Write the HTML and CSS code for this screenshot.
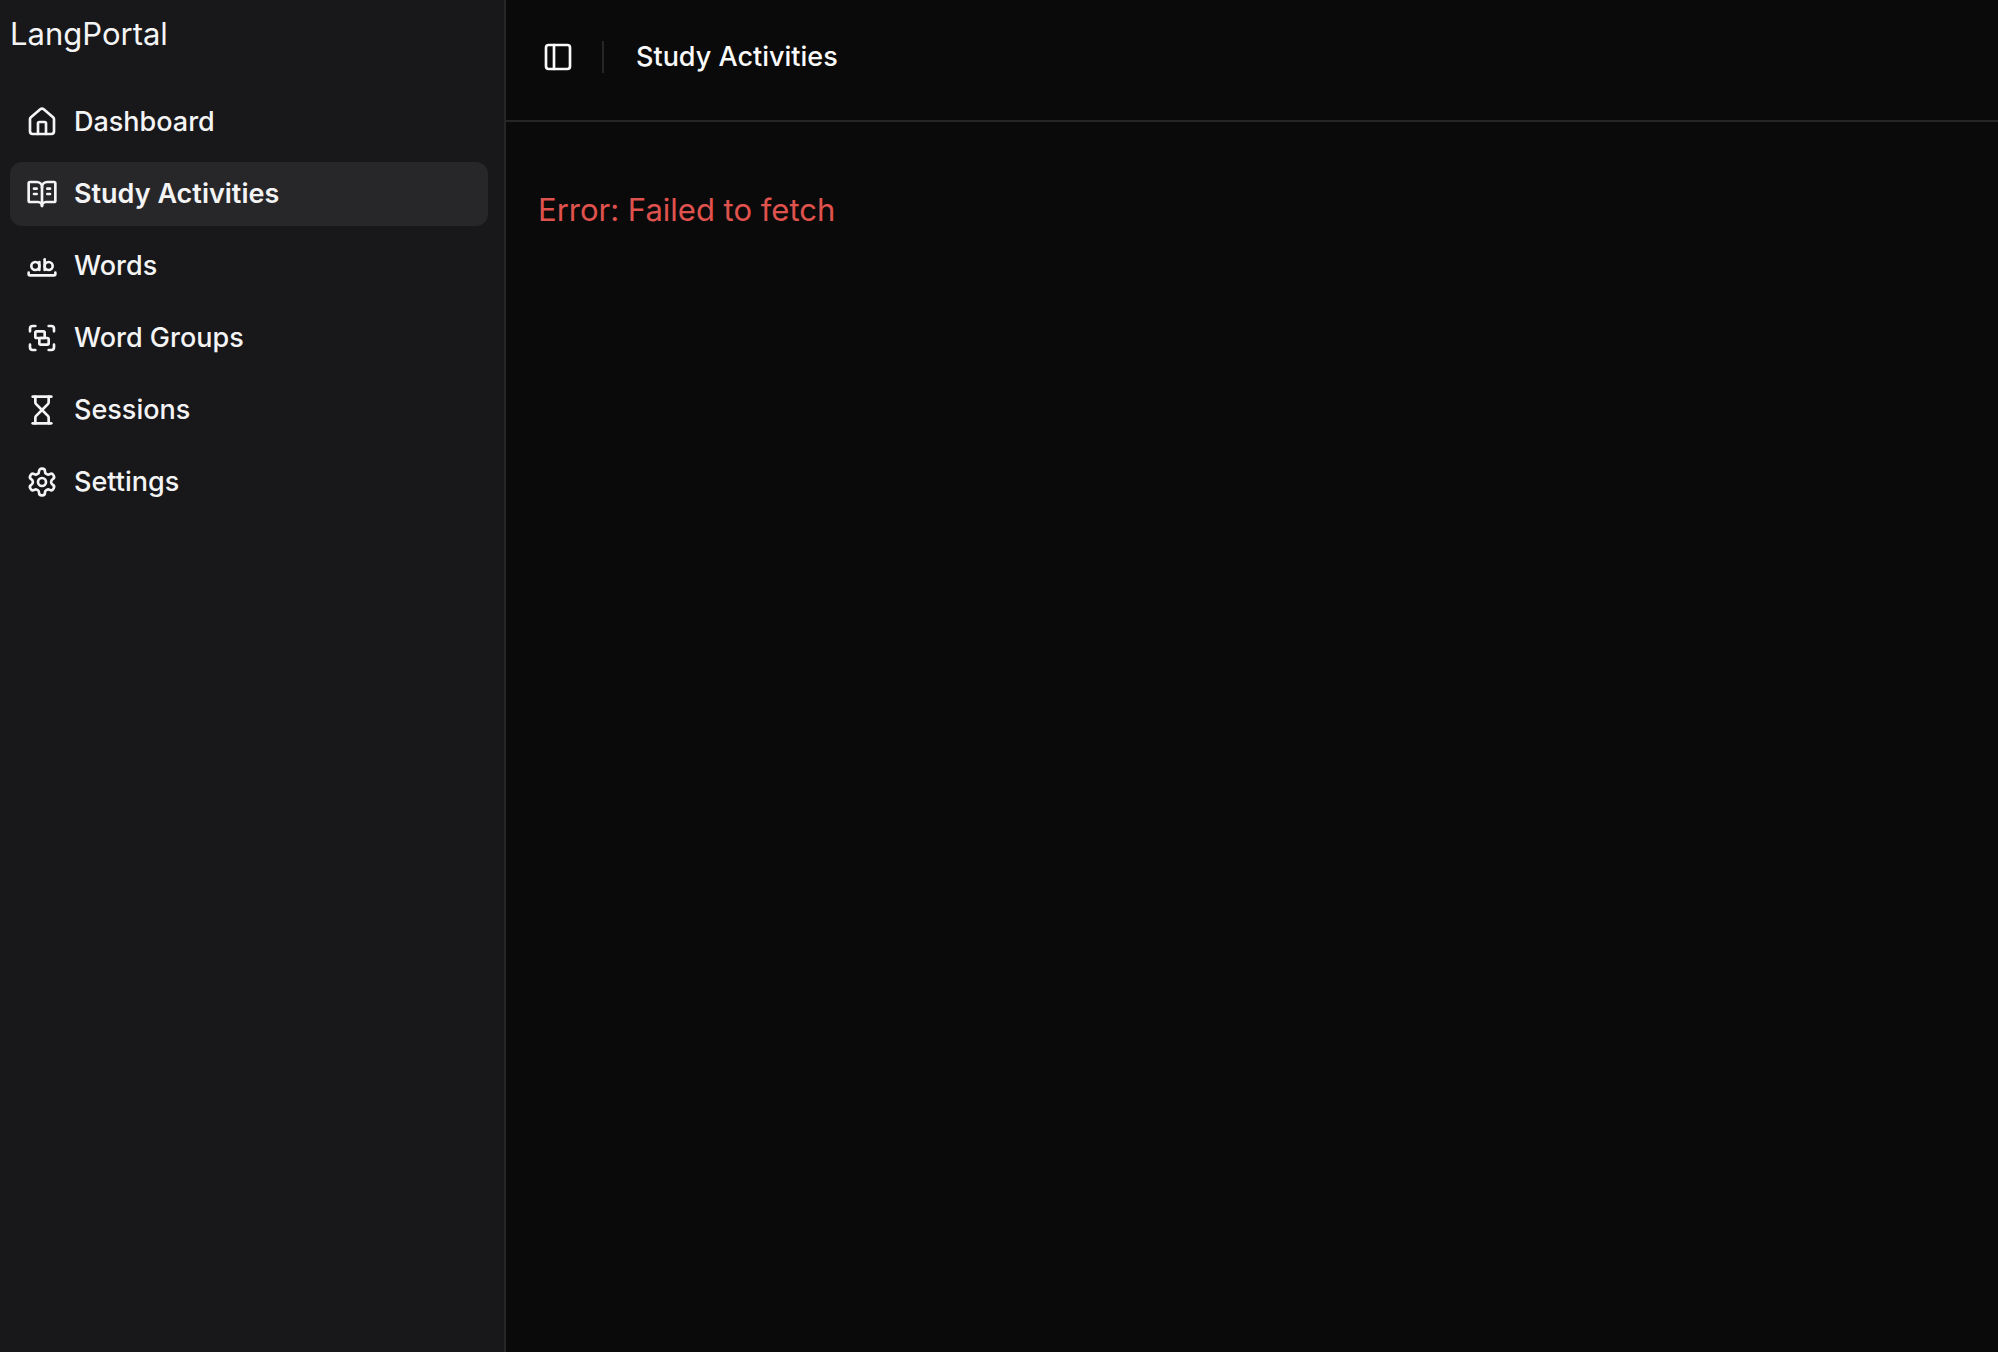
FILE: index.html
```html
<!DOCTYPE html>
<html lang="en">
<head>
<meta charset="utf-8">
<meta name="viewport" content="width=device-width, initial-scale=1">
<title>LangPortal</title>
<link rel="stylesheet" href="styles.css">
</head>
<body>
<div class="app">
  <aside class="sidebar">
    <div class="brand">LangPortal</div>
    <nav class="menu" aria-label="Main">
      <a class="menu-item" href="#dashboard">
        <svg class="icon" viewBox="0 0 24 24" aria-hidden="true"><path d="M15 21v-8a1 1 0 0 0-1-1h-4a1 1 0 0 0-1 1v8"/><path d="M3 10a2 2 0 0 1 .709-1.528l7-5.999a2 2 0 0 1 2.582 0l7 5.999A2 2 0 0 1 21 10v9a2 2 0 0 1-2 2H5a2 2 0 0 1-2-2z"/></svg>
        <span>Dashboard</span>
      </a>
      <a class="menu-item active" href="#study-activities" aria-current="page">
        <svg class="icon" viewBox="0 0 24 24" aria-hidden="true"><path d="M12 7v14"/><path d="M16 12h2"/><path d="M16 8h2"/><path d="M3 18a1 1 0 0 1-1-1V4a1 1 0 0 1 1-1h5a4 4 0 0 1 4 4 4 4 0 0 1 4-4h5a1 1 0 0 1 1 1v13a1 1 0 0 1-1 1h-6a3 3 0 0 0-3 3 3 3 0 0 0-3-3z"/><path d="M6 12h2"/><path d="M6 8h2"/></svg>
        <span>Study Activities</span>
      </a>
      <a class="menu-item" href="#words">
        <svg class="icon" viewBox="0 0 24 24" aria-hidden="true"><circle cx="7" cy="12" r="3"/><path d="M10 9v6"/><circle cx="17" cy="12" r="3"/><path d="M14 7v8"/><path d="M22 17v1c0 .5-.5 1-1 1H3c-.5 0-1-.5-1-1v-1"/></svg>
        <span>Words</span>
      </a>
      <a class="menu-item" href="#word-groups">
        <svg class="icon" viewBox="0 0 24 24" aria-hidden="true"><path d="M3 7V5c0-1.1.9-2 2-2h2"/><path d="M17 3h2c1.1 0 2 .9 2 2v2"/><path d="M21 17v2c0 1.1-.9 2-2 2h-2"/><path d="M7 21H5c-1.1 0-2-.9-2-2v-2"/><rect width="7" height="5" x="7" y="7" rx="1"/><rect width="7" height="5" x="10" y="12" rx="1"/></svg>
        <span>Word Groups</span>
      </a>
      <a class="menu-item" href="#sessions">
        <svg class="icon" viewBox="0 0 24 24" aria-hidden="true"><path d="M5 22h14"/><path d="M5 2h14"/><path d="M17 22v-4.172a2 2 0 0 0-.586-1.414L12 12l-4.414 4.414A2 2 0 0 0 7 17.828V22"/><path d="M7 2v4.172a2 2 0 0 0 .586 1.414L12 12l4.414-4.414A2 2 0 0 0 17 6.172V2"/></svg>
        <span>Sessions</span>
      </a>
      <a class="menu-item" href="#settings">
        <svg class="icon" viewBox="0 0 24 24" aria-hidden="true"><path d="M12.22 2h-.44a2 2 0 0 0-2 2v.18a2 2 0 0 1-1 1.73l-.43.25a2 2 0 0 1-2 0l-.15-.08a2 2 0 0 0-2.73.73l-.22.38a2 2 0 0 0 .73 2.73l.15.1a2 2 0 0 1 1 1.72v.51a2 2 0 0 1-1 1.74l-.15.09a2 2 0 0 0-.73 2.73l.22.38a2 2 0 0 0 2.73.73l.15-.08a2 2 0 0 1 2 0l.43.25a2 2 0 0 1 1 1.73V20a2 2 0 0 0 2 2h.44a2 2 0 0 0 2-2v-.18a2 2 0 0 1 1-1.73l.43-.25a2 2 0 0 1 2 0l.15.08a2 2 0 0 0 2.73-.73l.22-.39a2 2 0 0 0-.73-2.73l-.15-.08a2 2 0 0 1-1-1.74v-.5a2 2 0 0 1 1-1.74l.15-.09a2 2 0 0 0 .73-2.73l-.22-.38a2 2 0 0 0-2.73-.73l-.15.08a2 2 0 0 1-2 0l-.43-.25a2 2 0 0 1-1-1.73V4a2 2 0 0 0-2-2z"/><circle cx="12" cy="12" r="3"/></svg>
        <span>Settings</span>
      </a>
    </nav>
  </aside>
  <div class="page">
    <header class="topbar">
      <button class="toggle" type="button" aria-label="Toggle sidebar">
        <svg class="icon" viewBox="0 0 24 24" aria-hidden="true"><rect width="18" height="18" x="3" y="3" rx="2"/><path d="M9 3v18"/></svg>
      </button>
      <span class="separator"></span>
      <h1 class="title">Study Activities</h1>
    </header>
    <main class="content">
      <p class="error" role="alert">Error: Failed to fetch</p>
    </main>
  </div>
</div>
</body>
</html>
```
FILE: styles.css
```css
* {
  box-sizing: border-box;
}

body {
  margin: 0;
  background: #0a0a0a;
  color: #fafafa;
  font-family: Inter, "Liberation Sans", sans-serif;
  font-size: 27px;
  font-weight: 450;
  line-height: 40px;
}

.app {
  display: flex;
  min-height: 100vh;
}

.sidebar {
  flex: 0 0 506px;
  padding: 10px 16px 10px 10px;
  background: #18181b;
  border-right: 2px solid #262626;
  color: #f4f4f5;
}

.brand {
  margin-bottom: 32px;
  font-size: 31px;
  font-weight: 400;
  line-height: 48px;
}

.menu {
  display: flex;
  flex-direction: column;
  gap: 8px;
}

.menu-item {
  display: flex;
  align-items: center;
  gap: 16px;
  height: 64px;
  padding: 0 16px;
  border-radius: 12px;
  color: inherit;
  text-decoration: none;
}

.menu-item.active {
  background: #27272a;
  font-weight: 600;
}

.icon {
  flex: none;
  width: 32px;
  height: 32px;
  fill: none;
  stroke: currentColor;
  stroke-width: 2;
  stroke-linecap: round;
  stroke-linejoin: round;
}

.page {
  flex: 1;
  min-width: 0;
}

.topbar {
  display: flex;
  align-items: center;
  padding: 29px 24px 35px;
  border-bottom: 2px solid #262626;
}

.toggle {
  display: grid;
  place-items: center;
  width: 56px;
  height: 56px;
  padding: 0;
  border: 0;
  border-radius: 12px;
  background: none;
  color: inherit;
}

.separator {
  width: 2px;
  height: 32px;
  margin: 0 32px 0 16px;
  background: #262626;
}

.title {
  margin: 0;
  font-size: 27px;
  font-weight: 500;
}

.content {
  padding: 64px 32px;
}

.error {
  margin: 0;
  color: #e0524d;
  font-size: 31px;
  font-weight: 400;
  line-height: 48px;
}
```
